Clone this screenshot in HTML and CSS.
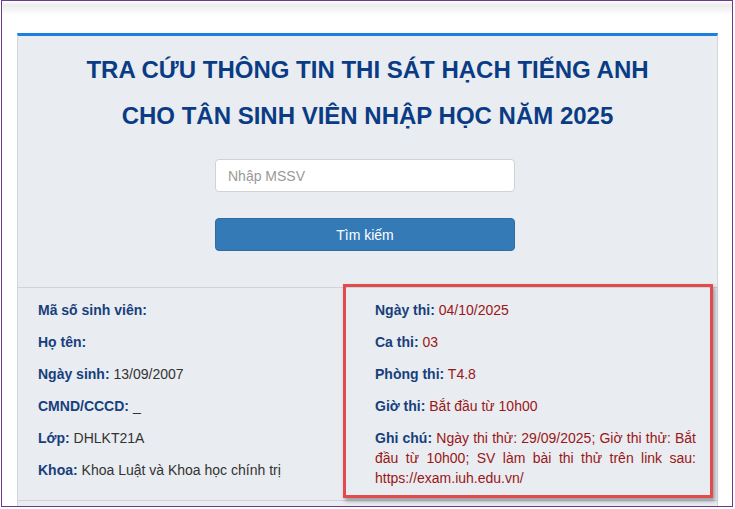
FILE: index.html
```html
<!DOCTYPE html>
<html lang="vi">
<head>
<meta charset="utf-8">
<title>Tra cứu thông tin thi sát hạch tiếng Anh</title>
<link rel="stylesheet" href="styles.css">
</head>
<body>
<div class="frame">
  <div class="topshade"></div>
  <div class="card">
    <h1 class="title">TRA CỨU THÔNG TIN THI SÁT HẠCH TIẾNG ANH<br>CHO TÂN SINH VIÊN NHẬP HỌC NĂM 2025</h1>
    <form class="search">
      <input class="mssv" type="text" placeholder="Nhập MSSV">
      <button class="btn" type="button">Tìm kiếm</button>
    </form>
    <div class="info">
      <div class="col col-left">
        <p><b>Mã số sinh viên:</b> </p>
        <p><b>Họ tên:</b> </p>
        <p><b>Ngày sinh:</b> 13/09/2007</p>
        <p><b>CMND/CCCD:</b> _</p>
        <p><b>Lớp:</b> DHLKT21A</p>
        <p><b>Khoa:</b> Khoa Luật và Khoa học chính trị</p>
      </div>
      <div class="col col-right">
        <p><b>Ngày thi:</b> 04/10/2025</p>
        <p><b>Ca thi:</b> 03</p>
        <p><b>Phòng thi:</b> T4.8</p>
        <p><b>Giờ thi:</b> Bắt đầu từ 10h00</p>
        <p class="note"><b>Ghi chú:</b> Ngày thi thử: 29/09/2025; Giờ thi thử: Bắt đầu từ 10h00; SV làm bài thi thử trên link sau: https://exam.iuh.edu.vn/</p>
      </div>
      <div class="highlight"></div>
    </div>
  </div>
</div>
</body>
</html>
```
FILE: styles.css
```css
html, body {
  margin: 0;
  padding: 0;
  background: #ffffff;
  font-family: "Liberation Sans", Arial, sans-serif;
}
.frame {
  position: relative;
  margin-left: 1px;
  width: 730px;
  height: 473px;
  border: 1px solid #6b3a8c;
  background: #ffffff;
  overflow: hidden;
  padding-top: 32px;
}
.topshade {
  position: absolute;
  left: 0;
  right: 0;
  top: 0;
  height: 14px;
  background: linear-gradient(to bottom, #ffffff 0px, #ececec 4px, #ffffff 14px);
}
.card {
  margin-left: 15px;
  width: 699px;
  border-top: 3px solid #1b7fe2;
  border-left: 1px solid #d2d5d9;
  border-right: 1px solid #d2d5d9;
  background: #e9ecf0;
  height: 500px;
}
.title {
  margin: 0;
  padding-top: 11px;
  text-align: center;
  font-size: 24px;
  line-height: 46px;
  font-weight: bold;
  color: #0a3c85;
}
.search {
  margin: 20px 0 0 197px;
  width: 300px;
  display: flex;
  flex-direction: column;
  gap: 26px;
}
.mssv {
  box-sizing: border-box;
  width: 300px;
  height: 33px;
  margin: 0;
  padding: 0 12px;
  border: 1px solid #cfd2d6;
  border-radius: 4px;
  background: #ffffff;
  font-family: "Liberation Sans", Arial, sans-serif;
  font-size: 14px;
  color: #555;
}
.mssv::placeholder {
  color: #999;
}
.btn {
  box-sizing: border-box;
  width: 300px;
  height: 33px;
  margin: 0;
  border: 1px solid #2e6da4;
  border-radius: 4px;
  background: #337ab7;
  color: #ffffff;
  font-family: "Liberation Sans", Arial, sans-serif;
  font-size: 14px;
}
.info {
  position: relative;
  margin-top: 36px;
  border-top: 1px solid #cfd2d6;
  border-bottom: 1px solid #cfd2d6;
  display: grid;
  grid-template-columns: 327px 372px;
  font-size: 14px;
  line-height: 20px;
  color: #333;
}
.col {
  padding-top: 12px;
}
.col p {
  margin: 0 0 12px 0;
}
.col b {
  color: #173f7d;
}
.col-left {
  padding-left: 20px;
}
.col-right {
  padding-left: 30px;
  padding-right: 21px;
  color: #9a1717;
}
.note {
  text-align: justify;
}
.highlight {
  position: absolute;
  left: 325px;
  top: -4px;
  width: 364px;
  height: 208px;
  border: 3px solid #e24a4c;
  box-shadow: 2px 3px 4px rgba(0, 0, 0, 0.35);
  pointer-events: none;
}
```
